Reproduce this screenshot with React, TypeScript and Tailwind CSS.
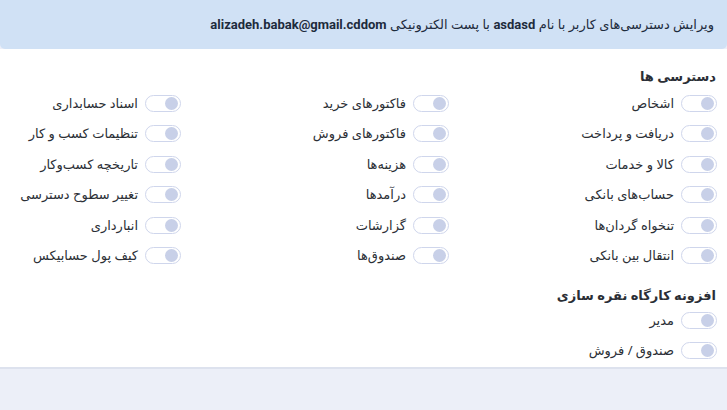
const groups: string[][] = [
  ["اشخاص", "دریافت و پرداخت", "کالا و خدمات", "حساب‌های بانکی", "تنخواه گردان‌ها", "انتقال بین بانکی"],
  ["فاکتورهای خرید", "فاکتورهای فروش", "هزینه‌ها", "درآمدها", "گزارشات", "صندوق‌ها"],
  ["اسناد حسابداری", "تنظیمات کسب و کار", "تاریخچه کسب‌وکار", "تغییر سطوح دسترسی", "انبارداری", "کیف پول حسابیکس"],
];

const plugin = ["مدیر", "صندوق / فروش"];

const Toggle = ({ label }: { label: string }) => (
  <div className="flex h-[30.5px] items-center gap-[7px]">
    <span className="flex h-[17px] w-[36px] shrink-0 items-center rounded-full border border-[#cfd6ec] bg-white px-[2px]">
      <span className="h-[13px] w-[13px] rounded-full bg-[#c8d0e8]" />
    </span>
    <span className="whitespace-nowrap text-[13px] text-[#2b2f36]">{label}</span>
  </div>
);

export default function App() {
  return (
    <div
      dir="rtl"
      className="min-h-screen bg-[#eceff8]"
      style={{ fontFamily: '"Noto Sans", "DejaVu Sans", sans-serif' }}
    >
      <header className="flex h-[49px] items-center rounded-b-[5px] bg-[#d0e1f5] pr-[13px] text-[13px] text-[#1d2b3c]">
        <span>
          ویرایش دسترسی‌های کاربر با نام <b className="font-bold" style={{ fontFamily: "Roboto, sans-serif" }}>asdasd</b> با پست الکترونیکی{" "}
          <b className="font-bold" style={{ fontFamily: "Roboto, sans-serif" }}>alizadeh.babak@gmail.cddom</b>
        </span>
      </header>

      <div className="border-b-2 border-[#dde2ee] bg-white pb-[1px] pr-[10px]">
        <h3 className="pr-[1px] pt-[18px] text-[13px] font-bold leading-[18px] text-[#2b2f36]">دسترسی ها</h3>
        <div className="mt-[3px] grid grid-cols-[268px_268px_1fr]">
          {groups.map((col, i) => (
            <div key={i} className="flex flex-col">
              {col.map((label) => (
                <Toggle key={label} label={label} />
              ))}
            </div>
          ))}
        </div>

        <h3 className="pr-[1px] pt-[15px] text-[13px] font-bold leading-[18px] text-[#2b2f36]">افزونه کارگاه نقره سازی</h3>
        <div className="mt-[1px] flex flex-col">
          {plugin.map((label) => (
            <Toggle key={label} label={label} />
          ))}
        </div>
      </div>
    </div>
  );
}
